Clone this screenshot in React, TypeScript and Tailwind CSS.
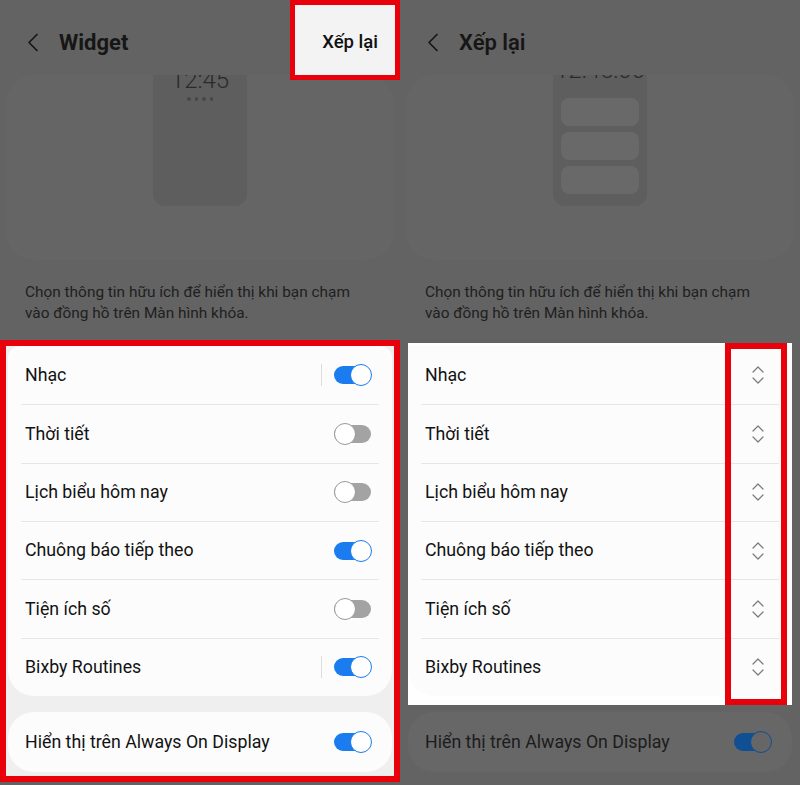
import React from "react";

type Item = { label: string; on: boolean; bar?: boolean };

const items: Item[] = [
  { label: "Nhạc", on: true, bar: true },
  { label: "Thời tiết", on: false },
  { label: "Lịch biểu hôm nay", on: false },
  { label: "Chuông báo tiếp theo", on: true },
  { label: "Tiện ích số", on: false },
  { label: "Bixby Routines", on: true, bar: true },
];

const BackIcon = () => (
  <svg width="13" height="19" viewBox="0 0 13 19" className="ml-[26px] shrink-0">
    <path d="M11 1.5 L3 9.5 L11 17.5" fill="none" stroke="#161616" strokeWidth="1.7" strokeLinecap="round" strokeLinejoin="round" />
  </svg>
);

const MoveIcon = () => (
  <svg width="12" height="18" viewBox="0 0 12 18" className="shrink-0">
    <path d="M1 6 L6 1 L11 6" fill="none" stroke="#7a7a7a" strokeWidth="1.2" strokeLinecap="round" strokeLinejoin="round" />
    <path d="M1 12 L6 17 L11 12" fill="none" stroke="#7a7a7a" strokeWidth="1.2" strokeLinecap="round" strokeLinejoin="round" />
  </svg>
);

function Toggle({ on, dim = false }: { on: boolean; dim?: boolean }) {
  const track = on ? (dim ? "bg-[#104f94]" : "bg-[#1b7cf0]") : "bg-[#a3a3a3]";
  const knob = on
    ? dim
      ? "left-[16px] border-[#104f94] bg-[#666666]"
      : "left-[16px] border-[#1b7cf0] bg-white"
    : "left-0 border-[#9a9a9a] bg-white";
  return (
    <div className="relative h-[22px] w-[38px] shrink-0">
      <div className={`absolute left-0 top-[2px] h-[18px] w-[37px] rounded-full ${track}`} />
      <div className={`absolute top-0 h-[22px] w-[22px] rounded-full border-[1.5px] ${knob}`} />
    </div>
  );
}

const Preview = ({ reorder }: { reorder?: boolean }) => (
  <div className="mx-[6px] h-[185px] shrink-0 overflow-hidden rounded-[28px] bg-[#656565]">
    <div className="ml-[147px] flex h-[131px] w-[94px] flex-col items-center overflow-hidden rounded-b-[12px] bg-[#5e5e5e]">
      {reorder ? (
        <>
          <div className="mt-[-17px] text-[24px] font-light leading-none text-[#2a2a2a]">12:45:00</div>
          <div className="mt-[16px] flex w-[78px] flex-col gap-[6px]">
            <div className="h-[28px] rounded-[8px] bg-[#696969]" />
            <div className="h-[28px] rounded-[8px] bg-[#696969]" />
            <div className="h-[28px] rounded-[8px] bg-[#696969]" />
          </div>
        </>
      ) : (
        <>
          <div className="mt-[-7px] text-[24px] font-light leading-none text-[#2a2a2a]">12:45</div>
          <div className="mt-[5px] flex gap-[4px]">
            <span className="h-[3.5px] w-[3.5px] rounded-full bg-[#474747]" />
            <span className="h-[3.5px] w-[3.5px] rounded-full bg-[#474747]" />
            <span className="h-[3.5px] w-[3.5px] rounded-full bg-[#474747]" />
            <span className="h-[3.5px] w-[3.5px] rounded-full bg-[#474747]" />
          </div>
        </>
      )}
    </div>
  </div>
);

const Description = () => (
  <p className="h-[80px] shrink-0 px-[25px] pt-[22px] text-[15.4px] leading-[21px] text-[#202020]">
    Chọn thông tin hữu ích để hiển thị khi bạn chạm
    <br />
    vào đồng hồ trên Màn hình khóa.
  </p>
);

const Header = ({ title, bold }: { title: string; bold?: boolean }) => (
  <div className="flex h-[75px] shrink-0 items-center pt-[10px]">
    <BackIcon />
    <span className={`ml-[20px] text-[22px] text-[#161616] ${bold ? "font-bold" : "font-semibold"}`}>{title}</span>
  </div>
);

export default function App() {
  return (
    <div className="flex h-[785px] w-[800px] overflow-hidden bg-[#636363] font-['Roboto',sans-serif]">
      {/* left: widget settings */}
      <div className="relative flex w-[400px] flex-col">
        <Header title="Widget" bold />
        <div className="absolute right-0 top-0 z-10 flex h-[80px] w-[110px] items-center justify-end border-[5px] border-[#e8000b] bg-[#f3f3f3] pr-[17px] pt-[5px]">
          <span className="text-[18.5px] font-medium text-[#111111]">Xếp lại</span>
        </div>
        <Preview />
        <Description />

        <div className="flex h-[442px] shrink-0 flex-col border-[6px] border-[#e8000b] bg-[#efefef] px-[2px]">
          <div className="rounded-b-[26px] rounded-t-[12px] bg-[#fcfcfc]">
            {items.map((it, i) => (
              <div
                key={it.label}
                className={`mx-[13px] flex h-[58.33px] items-center pl-[4px] pr-[7px] ${i > 0 ? "border-t border-[#e6e6e6]" : ""}`}
              >
                <span className="flex-1 text-[17.75px] text-[#121212]">{it.label}</span>
                {it.bar && <div className="mr-[12px] h-[22px] w-px bg-[#dcdcdc]" />}
                <Toggle on={it.on} />
              </div>
            ))}
          </div>
          <div className="mt-[16px] flex h-[60px] items-center rounded-[26px] bg-[#fcfcfc] pl-[17px] pr-[20px]">
            <span className="flex-1 text-[17.75px] text-[#121212]">Hiển thị trên Always On Display</span>
            <Toggle on />
          </div>
        </div>
      </div>

      {/* right: reorder mode */}
      <div className="relative flex w-[400px] flex-col">
        <Header title="Xếp lại" />
        <Preview reorder />
        <Description />

        <div className="mx-2 mt-[3px] h-[362px] shrink-0 bg-white pt-[3px]">
          <div className="rounded-b-[26px] bg-[#fcfcfc]">
            {items.map((it, i) => (
              <div
                key={it.label}
                className={`mx-[13px] flex h-[58.33px] items-center pl-[4px] pr-[15px] ${i > 0 ? "border-t border-[#e6e6e6]" : ""}`}
              >
                <span className="flex-1 text-[17.75px] text-[#121212]">{it.label}</span>
                <MoveIcon />
              </div>
            ))}
          </div>
        </div>
        <div className="mx-2 mt-[7px] flex h-[60px] shrink-0 items-center rounded-[26px] bg-[#676767] pl-[17px] pr-[20px]">
          <span className="flex-1 text-[17.75px] text-[#1c1c1c]">Hiển thị trên Always On Display</span>
          <Toggle on dim />
        </div>

        <div className="absolute left-[325px] top-[343px] h-[362px] w-[62px] border-[6px] border-[#e8000b]" />
      </div>
    </div>
  );
}
